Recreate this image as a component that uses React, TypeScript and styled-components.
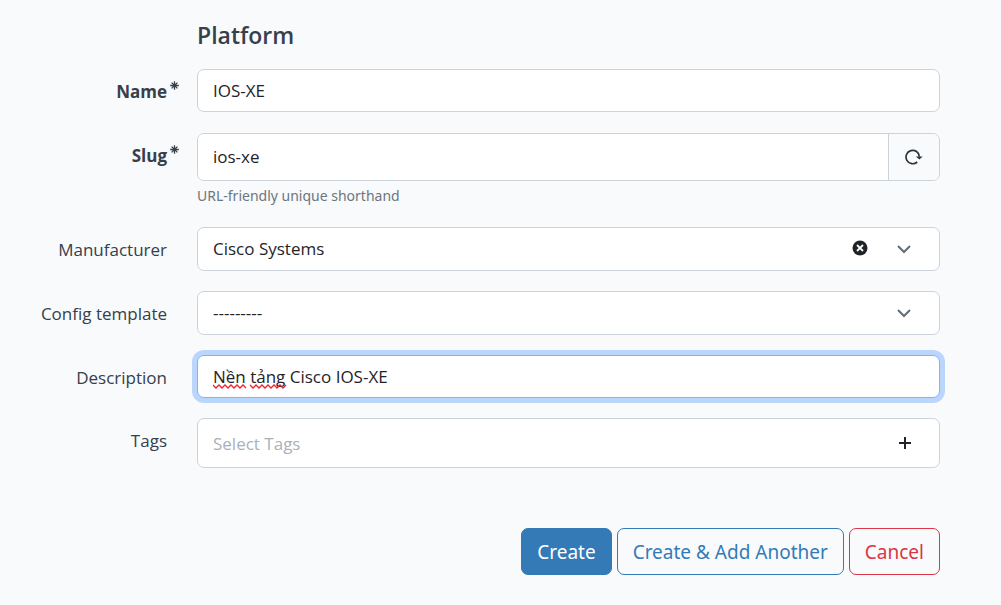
import React from "react";
import styled, { createGlobalStyle } from "styled-components";

const GlobalStyle = createGlobalStyle`
  * { box-sizing: border-box; }
  body {
    margin: 0;
    background: #f8fafc;
    color: #36404a;
    font: 400 17px/24px "Open Sans", "Noto Sans", sans-serif;
  }
  input, select, button { font: inherit; }
`;

const Form = styled.form`
  padding: 19px 61px 30px 0;
`;

const Title = styled.h2`
  margin: 0 0 18px 197px;
  font-size: 23px;
  line-height: 32px;
  font-weight: 600;
`;

const Row = styled.div`
  display: grid;
  grid-template-columns: 167px minmax(0, 1fr);
  column-gap: 30px;
  align-items: start;
  margin-bottom: 20px;
`;

const Label = styled.label<{ $required?: boolean }>`
  position: relative;
  padding: ${(p) => (p.$required ? "11px 0 9px" : "11px 0 8px")};
  text-align: right;
  font-weight: ${(p) => (p.$required ? 700 : 400)};
`;

const RequiredMark = styled.svg`
  position: absolute;
  left: calc(100% + 3px);
  top: 12px;
  width: 9px;
  height: 9px;
`;

const Field = styled.div`
  position: relative;
`;

const frame = `
  display: block;
  width: 100%;
  margin: 0;
  padding: 0 15px;
  border: 1px solid #cdd3da;
  border-radius: 7px;
  background: #fff;
  color: #1f2328;
  outline: none;
`;

const TextInput = styled.input<{ $active?: boolean; $height?: number }>`
  ${frame}
  height: ${(p) => p.$height ?? 43}px;
  ${(p) => p.$active && "border-color: #83b3f5; box-shadow: 0 0 0 5px #bad6fb;"}
  &::placeholder { color: #a9b1ba; opacity: 1; }
`;

const Select = styled.select`
  ${frame}
  height: 44px;
  appearance: none;
`;

const Group = styled.div`
  display: flex;
  height: 48px;
  border: 1px solid #cdd3da;
  border-radius: 7px;
  overflow: hidden;
`;

const GroupInput = styled.input`
  flex: 1;
  min-width: 0;
  padding: 0 15px;
  border: 0;
  background: #fff;
  color: #1f2328;
  outline: none;
`;

const GroupButton = styled.button`
  display: flex;
  align-items: center;
  justify-content: center;
  width: 51px;
  padding: 0;
  border: 0;
  border-left: 1px solid #cdd3da;
  background: #f8fafc;
  color: #2b333b;
`;

const Help = styled.small`
  display: block;
  margin-top: 4px;
  padding-bottom: 1px;
  font-family: "Noto Sans", sans-serif;
  font-size: 14px;
  line-height: 21px;
  color: #6c7680;
`;

const Adornments = styled.div`
  position: absolute;
  inset: 0 29px 0 auto;
  display: flex;
  align-items: center;
  gap: 29px;
  color: #626d78;
  pointer-events: none;
`;

const ClearButton = styled.button`
  display: flex;
  padding: 0 0 2px;
  border: 0;
  background: none;
  color: #1f2328;
  pointer-events: auto;
`;

const SpellingMarks = styled.svg`
  position: absolute;
  left: 16px;
  top: 29px;
  pointer-events: none;
`;

const Actions = styled.div`
  display: flex;
  justify-content: flex-end;
  gap: 5px;
  padding-top: 40px;
`;

const Button = styled.button<{ $color: string; $filled?: boolean }>`
  height: 47px;
  padding: 0 15px;
  border: 1px solid ${(p) => p.$color};
  border-radius: 7px;
  background: ${(p) => (p.$filled ? p.$color : "transparent")};
  color: ${(p) => (p.$filled ? "#fff" : p.$color)};
  font-family: "Noto Sans", sans-serif;
  font-size: 19px;
`;

const Asterisk = () => (
  <RequiredMark viewBox="0 0 9 9" aria-hidden="true" stroke="currentColor" strokeWidth="1.3">
    <path d="M4.5 .2v8.6M.2 4.5h8.6M1.6 1.6l5.8 5.8M7.4 1.6L1.6 7.4" />
    <circle cx="4.5" cy="4.5" r="1.8" fill="currentColor" stroke="none" />
  </RequiredMark>
);

const Chevron = () => (
  <svg width="14" height="10" viewBox="0 0 14 10" fill="none" stroke="currentColor" strokeWidth="2" aria-hidden="true">
    <path d="M1 2l6 6 6-6" />
  </svg>
);

const squiggle = (from: number, to: number) => {
  let d = `M${from} 1`;
  for (let x = from + 3, down = true; x <= to; x += 3, down = !down) d += `L${x} ${down ? 4 : 1}`;
  return d;
};

export default function App() {
  return (
    <>
      <GlobalStyle />
      <Form onSubmit={(e) => e.preventDefault()}>
        <Title>Platform</Title>
        <Row>
          <Label htmlFor="name" $required>Name<Asterisk /></Label>
          <TextInput id="name" defaultValue="IOS-XE" required />
        </Row>
        <Row>
          <Label htmlFor="slug" $required>Slug<Asterisk /></Label>
          <Field>
            <Group>
              <GroupInput id="slug" defaultValue="ios-xe" required />
              <GroupButton type="button" aria-label="Regenerate slug">
                <svg width="18" height="18" viewBox="0 0 18 18" aria-hidden="true">
                  <path d="M12.2 14A6.7 6.7 0 1 1 14.4 8.6" fill="none" stroke="currentColor" strokeWidth="1.7" />
                  <path d="M10.9 8.4h6.8l-3.4 3.2z" fill="currentColor" />
                </svg>
              </GroupButton>
            </Group>
            <Help>URL-friendly unique shorthand</Help>
          </Field>
        </Row>
        <Row>
          <Label htmlFor="manufacturer">Manufacturer</Label>
          <Field>
            <Select id="manufacturer"><option>Cisco Systems</option></Select>
            <Adornments>
              <ClearButton type="button" aria-label="Clear manufacturer">
                <svg width="16" height="16" viewBox="0 0 16 16" aria-hidden="true">
                  <circle cx="8" cy="8" r="7.5" fill="currentColor" />
                  <path d="M5 5l6 6M11 5l-6 6" stroke="#fff" strokeWidth="1.8" />
                </svg>
              </ClearButton>
              <Chevron />
            </Adornments>
          </Field>
        </Row>
        <Row>
          <Label htmlFor="template">Config template</Label>
          <Field>
            <Select id="template"><option>---------</option></Select>
            <Adornments><Chevron /></Adornments>
          </Field>
        </Row>
        <Row>
          <Label htmlFor="description">Description</Label>
          <Field>
            <TextInput id="description" defaultValue="Nền tảng Cisco IOS-XE" $active />
            <SpellingMarks width="76" height="6" fill="none" stroke="#f0202c" strokeWidth="1.3" aria-hidden="true">
              <path d={squiggle(0, 33)} />
              <path d={squiggle(37, 73)} />
            </SpellingMarks>
          </Field>
        </Row>
        <Row>
          <Label htmlFor="tags">Tags</Label>
          <Field>
            <TextInput id="tags" placeholder="Select Tags" $height={50} />
            <Adornments>
              <svg width="12" height="12" viewBox="0 0 12 12" stroke="#1f2328" strokeWidth="2" aria-hidden="true">
                <path d="M6 0v12M0 6h12" />
              </svg>
            </Adornments>
          </Field>
        </Row>
        <Actions>
          <Button type="submit" $color="#337ab7" $filled>Create</Button>
          <Button type="button" $color="#337ab7">Create &amp; Add Another</Button>
          <Button type="button" $color="#dc3545">Cancel</Button>
        </Actions>
      </Form>
    </>
  );
}
